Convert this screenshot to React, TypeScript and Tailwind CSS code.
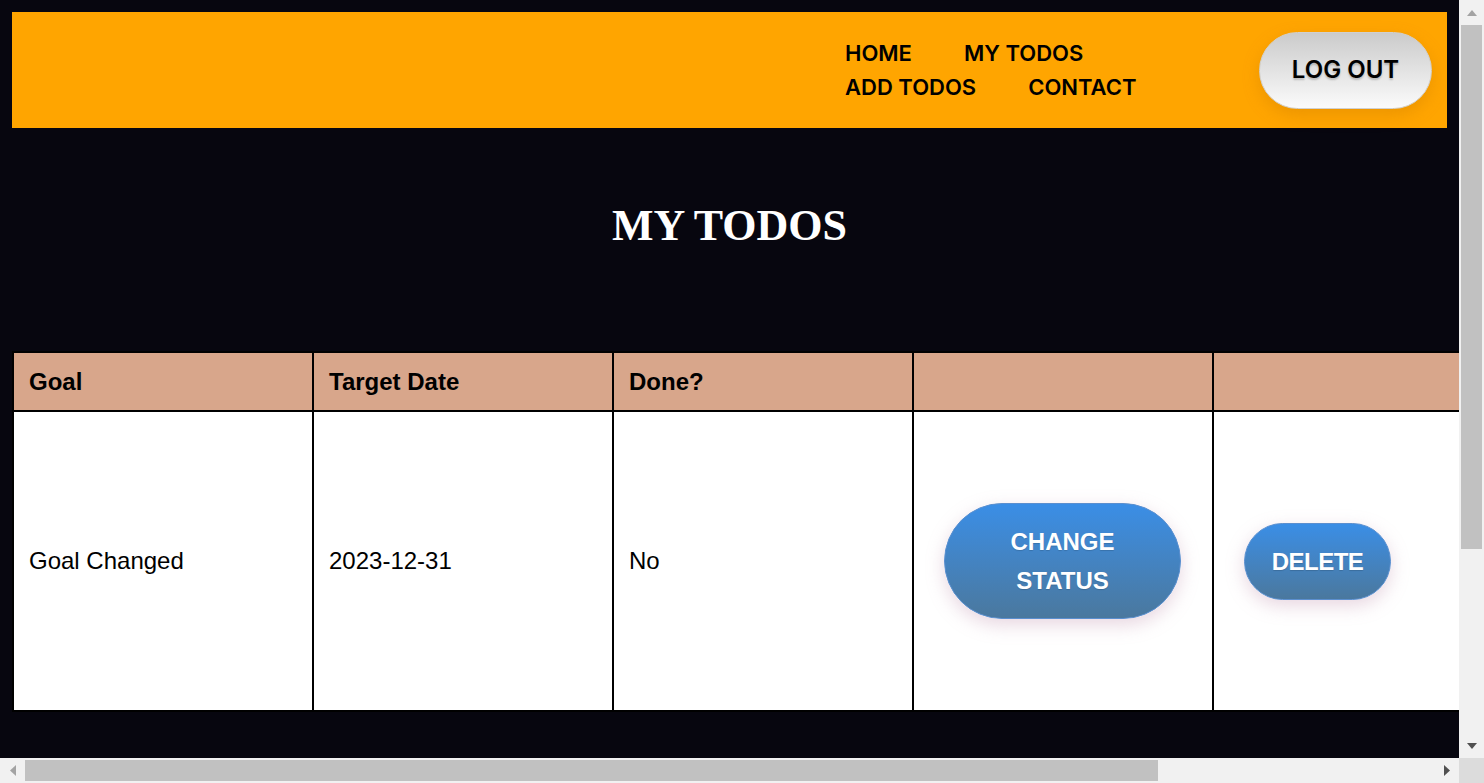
const navLinks = ['HOME', 'MY TODOS', 'ADD TODOS', 'CONTACT'];

const todos = [{ id: 1, description: 'Goal Changed', targetDate: '2023-12-31', done: false }];

const blueBtn =
  'rounded-full bg-linear-to-b from-[#3a8ee6] to-[#4a789e] border border-[#5b8fcf] text-white font-semibold text-[24px] leading-[39px] shadow-[0_6px_18px_rgba(190,140,170,0.35)] [text-shadow:0_1px_1px_rgba(0,0,0,0.15)]';

type Dir = 'up' | 'down' | 'left' | 'right';

const arrowPaths: Record<Dir, string> = {
  up: 'M5 0L10 6H0Z',
  down: 'M0 0H10L5 6Z',
  left: 'M6 0V11L0 5.5Z',
  right: 'M0 0L6 5.5L0 11Z',
};

function ScrollArrow({ dir, active }: { dir: Dir; active: boolean }) {
  const vertical = dir === 'up' || dir === 'down';
  return (
    <div className="w-[25px] h-[25px] flex items-center justify-center bg-[#f1f1f1]">
      <svg
        width={vertical ? 10 : 6}
        height={vertical ? 6 : 11}
        viewBox={vertical ? '0 0 10 6' : '0 0 6 11'}
        fill={active ? '#505050' : '#a3a3a3'}
      >
        <path d={arrowPaths[dir]} />
      </svg>
    </div>
  );
}

function TodoPage() {
  return (
    <div className="p-[12px] font-['Inter','Liberation_Sans',sans-serif]">
      {/* Header */}
      <header className="bg-[#ffa500] h-[116px] flex items-center justify-end pr-[15px]">
        <nav className="w-[340px] mr-[74px] flex flex-wrap gap-x-[52px] text-[22px] font-semibold leading-[34px] text-black">
          {navLinks.map((l) => (
            <a key={l} className="whitespace-nowrap cursor-pointer">
              {l}
            </a>
          ))}
        </nav>
        <button className="w-[173px] h-[77px] rounded-full bg-linear-to-b from-[#cbcbcb] to-[#fbfbfb] border border-[#d0d0d0] shadow-[0_6px_16px_rgba(200,120,0,0.35)] text-black font-semibold text-[24px] [text-shadow:0_2px_2px_rgba(0,0,0,0.2)]">
          LOG OUT
        </button>
      </header>

      <h1 className="mt-[73px] mb-[100px] text-center text-white font-bold text-[44px] leading-[50px] font-['Liberation_Serif','Times_New_Roman',serif]">
        MY TODOS
      </h1>

      <table className="w-[1790px] border-collapse border-2 border-black font-['Liberation_Sans',Arial,sans-serif] text-[24px] text-black">
        <thead>
          <tr className="bg-[#d8a68b]">
            <th className="w-[300px] h-[59px] border-2 border-black text-left font-bold px-[15px]">Goal</th>
            <th className="w-[300px] border-2 border-black text-left font-bold px-[15px]">Target Date</th>
            <th className="w-[300px] border-2 border-black text-left font-bold px-[15px]">Done?</th>
            <th className="w-[300px] border-2 border-black"></th>
            <th className="border-2 border-black"></th>
          </tr>
        </thead>
        <tbody>
          {todos.map((t) => (
            <tr key={t.id} className="bg-white">
              <td className="h-[300px] border-2 border-black px-[15px]">{t.description}</td>
              <td className="border-2 border-black px-[15px]">{t.targetDate}</td>
              <td className="border-2 border-black px-[15px]">{t.done ? 'Yes' : 'No'}</td>
              <td className="border-2 border-black px-[30px]">
                <button className={`${blueBtn} w-[237px] h-[116px]`}>
                  CHANGE
                  <br />
                  STATUS
                </button>
              </td>
              <td className="border-2 border-black px-[30px]">
                <button className={`${blueBtn} w-[147px] h-[77px] tracking-[-0.5px]`}>DELETE</button>
              </td>
            </tr>
          ))}
        </tbody>
      </table>
    </div>
  );
}

export default function App() {
  return (
    <div className="w-screen h-screen grid grid-cols-[1fr_25px] grid-rows-[1fr_25px]">
      {/* visible part of the page */}
      <div className="overflow-hidden bg-[#07060f]">
        <TodoPage />
      </div>

      {/* vertical scrollbar */}
      <div className="flex flex-col bg-[#f1f1f1]">
        <ScrollArrow dir="up" active={false} />
        <div className="flex-1 px-[2px]">
          <div className="h-[524px] bg-[#c1c1c1]" />
        </div>
        <ScrollArrow dir="down" active />
      </div>

      {/* horizontal scrollbar */}
      <div className="flex bg-[#f1f1f1]">
        <ScrollArrow dir="left" active={false} />
        <div className="flex-1 py-[2px]">
          <div className="w-[1133px] h-full bg-[#c1c1c1]" />
        </div>
        <ScrollArrow dir="right" active />
      </div>

      <div className="bg-[#dcdcdc]" />
    </div>
  );
}
